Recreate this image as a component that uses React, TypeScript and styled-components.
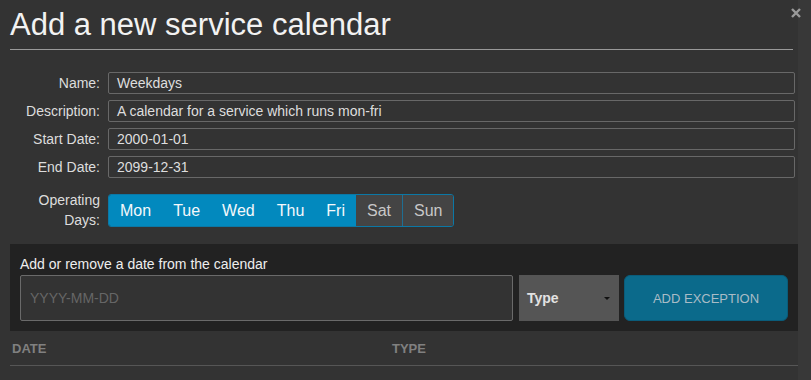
import styled, { createGlobalStyle } from "styled-components";

const GlobalStyle = createGlobalStyle`
  html, body {
    margin: 0;
    padding: 0;
    background: #333333;
  }
  body {
    font-family: "Liberation Sans", Arial, sans-serif;
    color: #e6e6e6;
  }
`;

const Page = styled.div`
  display: flex;
  width: 811px;
  height: 380px;
  overflow: hidden;
`;

const Modal = styled.div`
  position: relative;
  width: 788px;
  padding-left: 10px;
  background: #333333;
`;

const Gutter = styled.div`
  flex: 1;
  background: #383838;
`;

const Title = styled.h1`
  margin: 0 5px 0 0;
  padding: 8px 0 7px;
  font-size: 31px;
  line-height: 34px;
  font-weight: normal;
  color: #f2f2f2;
  border-bottom: 1px solid #999999;
`;

const Close = styled.button`
  position: absolute;
  top: 7px;
  right: -4px;
  width: 12px;
  height: 12px;
  padding: 0;
  border: 0;
  background: none;
  display: flex;
`;

const Form = styled.div`
  display: flex;
  flex-direction: column;
  gap: 6px;
  margin: 22px 3px 0 0;
`;

const Row = styled.div<{ $top?: number }>`
  display: grid;
  grid-template-columns: 90px 1fr;
  column-gap: 8px;
  align-items: center;
  margin-top: ${(p) => p.$top ?? 0}px;
`;

const Label = styled.label`
  text-align: right;
  font-size: 14px;
  line-height: 20px;
  color: #dddddd;
`;

const TextInput = styled.div`
  height: 20px;
  border: 1px solid #686868;
  border-radius: 2px;
  padding: 0 8px;
  font-size: 14px;
  line-height: 20px;
  color: #dedede;
`;

const DayGroup = styled.div`
  display: inline-flex;
  justify-self: start;
  border: 1px solid #0b78a6;
  border-radius: 3px;
  overflow: hidden;
`;

const Day = styled.div<{ $on: boolean; $sep?: boolean }>`
  padding: 0 11px;
  height: 31px;
  line-height: 31px;
  font-size: 16px;
  background: ${(p) => (p.$on ? "#0289be" : "#444444")};
  color: ${(p) => (p.$on ? "#f4f8fb" : "#c8c8c8")};
  border-left: ${(p) => (p.$sep ? "1px solid #1f6e92" : "0")};
`;

const Exception = styled.div`
  margin-top: 14px;
  background: #222222;
  padding: 12px 10px 10px;
`;

const ExceptionTitle = styled.div`
  font-size: 14px;
  line-height: 17px;
  margin-bottom: 2px;
  color: #eeeeee;
`;

const ExceptionBar = styled.div`
  display: flex;
  height: 46px;
`;

const DateField = styled.div`
  width: 493px;
  box-sizing: border-box;
  border: 1px solid #6a6a6a;
  border-radius: 2px;
  background: #333333;
  padding-left: 9px;
  font-size: 14px;
  line-height: 44px;
  color: #666666;
`;

const TypeSelect = styled.div`
  width: 100px;
  margin-left: 6px;
  box-sizing: border-box;
  background: #555555;
  display: flex;
  align-items: center;
  justify-content: space-between;
  padding: 0 9px 0 8px;
  font-size: 14px;
  font-weight: bold;
  color: #e2e2e2;
`;

const Caret = styled.span`
  width: 0;
  height: 0;
  border-left: 3px solid transparent;
  border-right: 3px solid transparent;
  border-top: 3px solid #111111;
`;

const AddButton = styled.button`
  width: 164px;
  margin-left: 5px;
  border: 1px solid #0a5c7a;
  border-radius: 6px;
  background: #0b6a8b;
  color: #a9bcc6;
  font-family: inherit;
  font-size: 13px;
  padding: 0;
`;

const TableHead = styled.div`
  display: grid;
  grid-template-columns: 380px 1fr;
  padding: 10px 0 9px;
  border-bottom: 1px solid #565656;
`;

const HeadCell = styled.div`
  padding-left: 2px;
  font-size: 13px;
  line-height: 15px;
  font-weight: bold;
  color: #808080;
`;

const days = [
  { name: "Mon", on: true },
  { name: "Tue", on: true },
  { name: "Wed", on: true },
  { name: "Thu", on: true },
  { name: "Fri", on: true },
  { name: "Sat", on: false },
  { name: "Sun", on: false },
];

const fields = [
  ["Name:", "Weekdays"],
  ["Description:", "A calendar for a service which runs mon-fri"],
  ["Start Date:", "2000-01-01"],
  ["End Date:", "2099-12-31"],
];

export default function App() {
  return (
    <Page>
      <GlobalStyle />
      <Modal>
        <Title>Add a new service calendar</Title>
        <Close aria-label="close">
          <svg width="12" height="12" viewBox="0 0 12 12">
            <path d="M2 2 L10 10 M10 2 L2 10" stroke="#9a9a9a" strokeWidth="2.4" />
          </svg>
        </Close>
        <Form>
          {fields.map(([label, value]) => (
            <Row key={label}>
              <Label>{label}</Label>
              <TextInput>{value}</TextInput>
            </Row>
          ))}
          <Row $top={6}>
            <Label>Operating Days:</Label>
            <DayGroup>
              {days.map((d, i) => (
                <Day key={d.name} $on={d.on} $sep={i === 6}>
                  {d.name}
                </Day>
              ))}
            </DayGroup>
          </Row>
        </Form>
        <Exception>
          <ExceptionTitle>Add or remove a date from the calendar</ExceptionTitle>
          <ExceptionBar>
            <DateField>YYYY-MM-DD</DateField>
            <TypeSelect>
              Type
              <Caret />
            </TypeSelect>
            <AddButton>ADD EXCEPTION</AddButton>
          </ExceptionBar>
        </Exception>
        <TableHead>
          <HeadCell>DATE</HeadCell>
          <HeadCell>TYPE</HeadCell>
        </TableHead>
      </Modal>
      <Gutter />
    </Page>
  );
}
